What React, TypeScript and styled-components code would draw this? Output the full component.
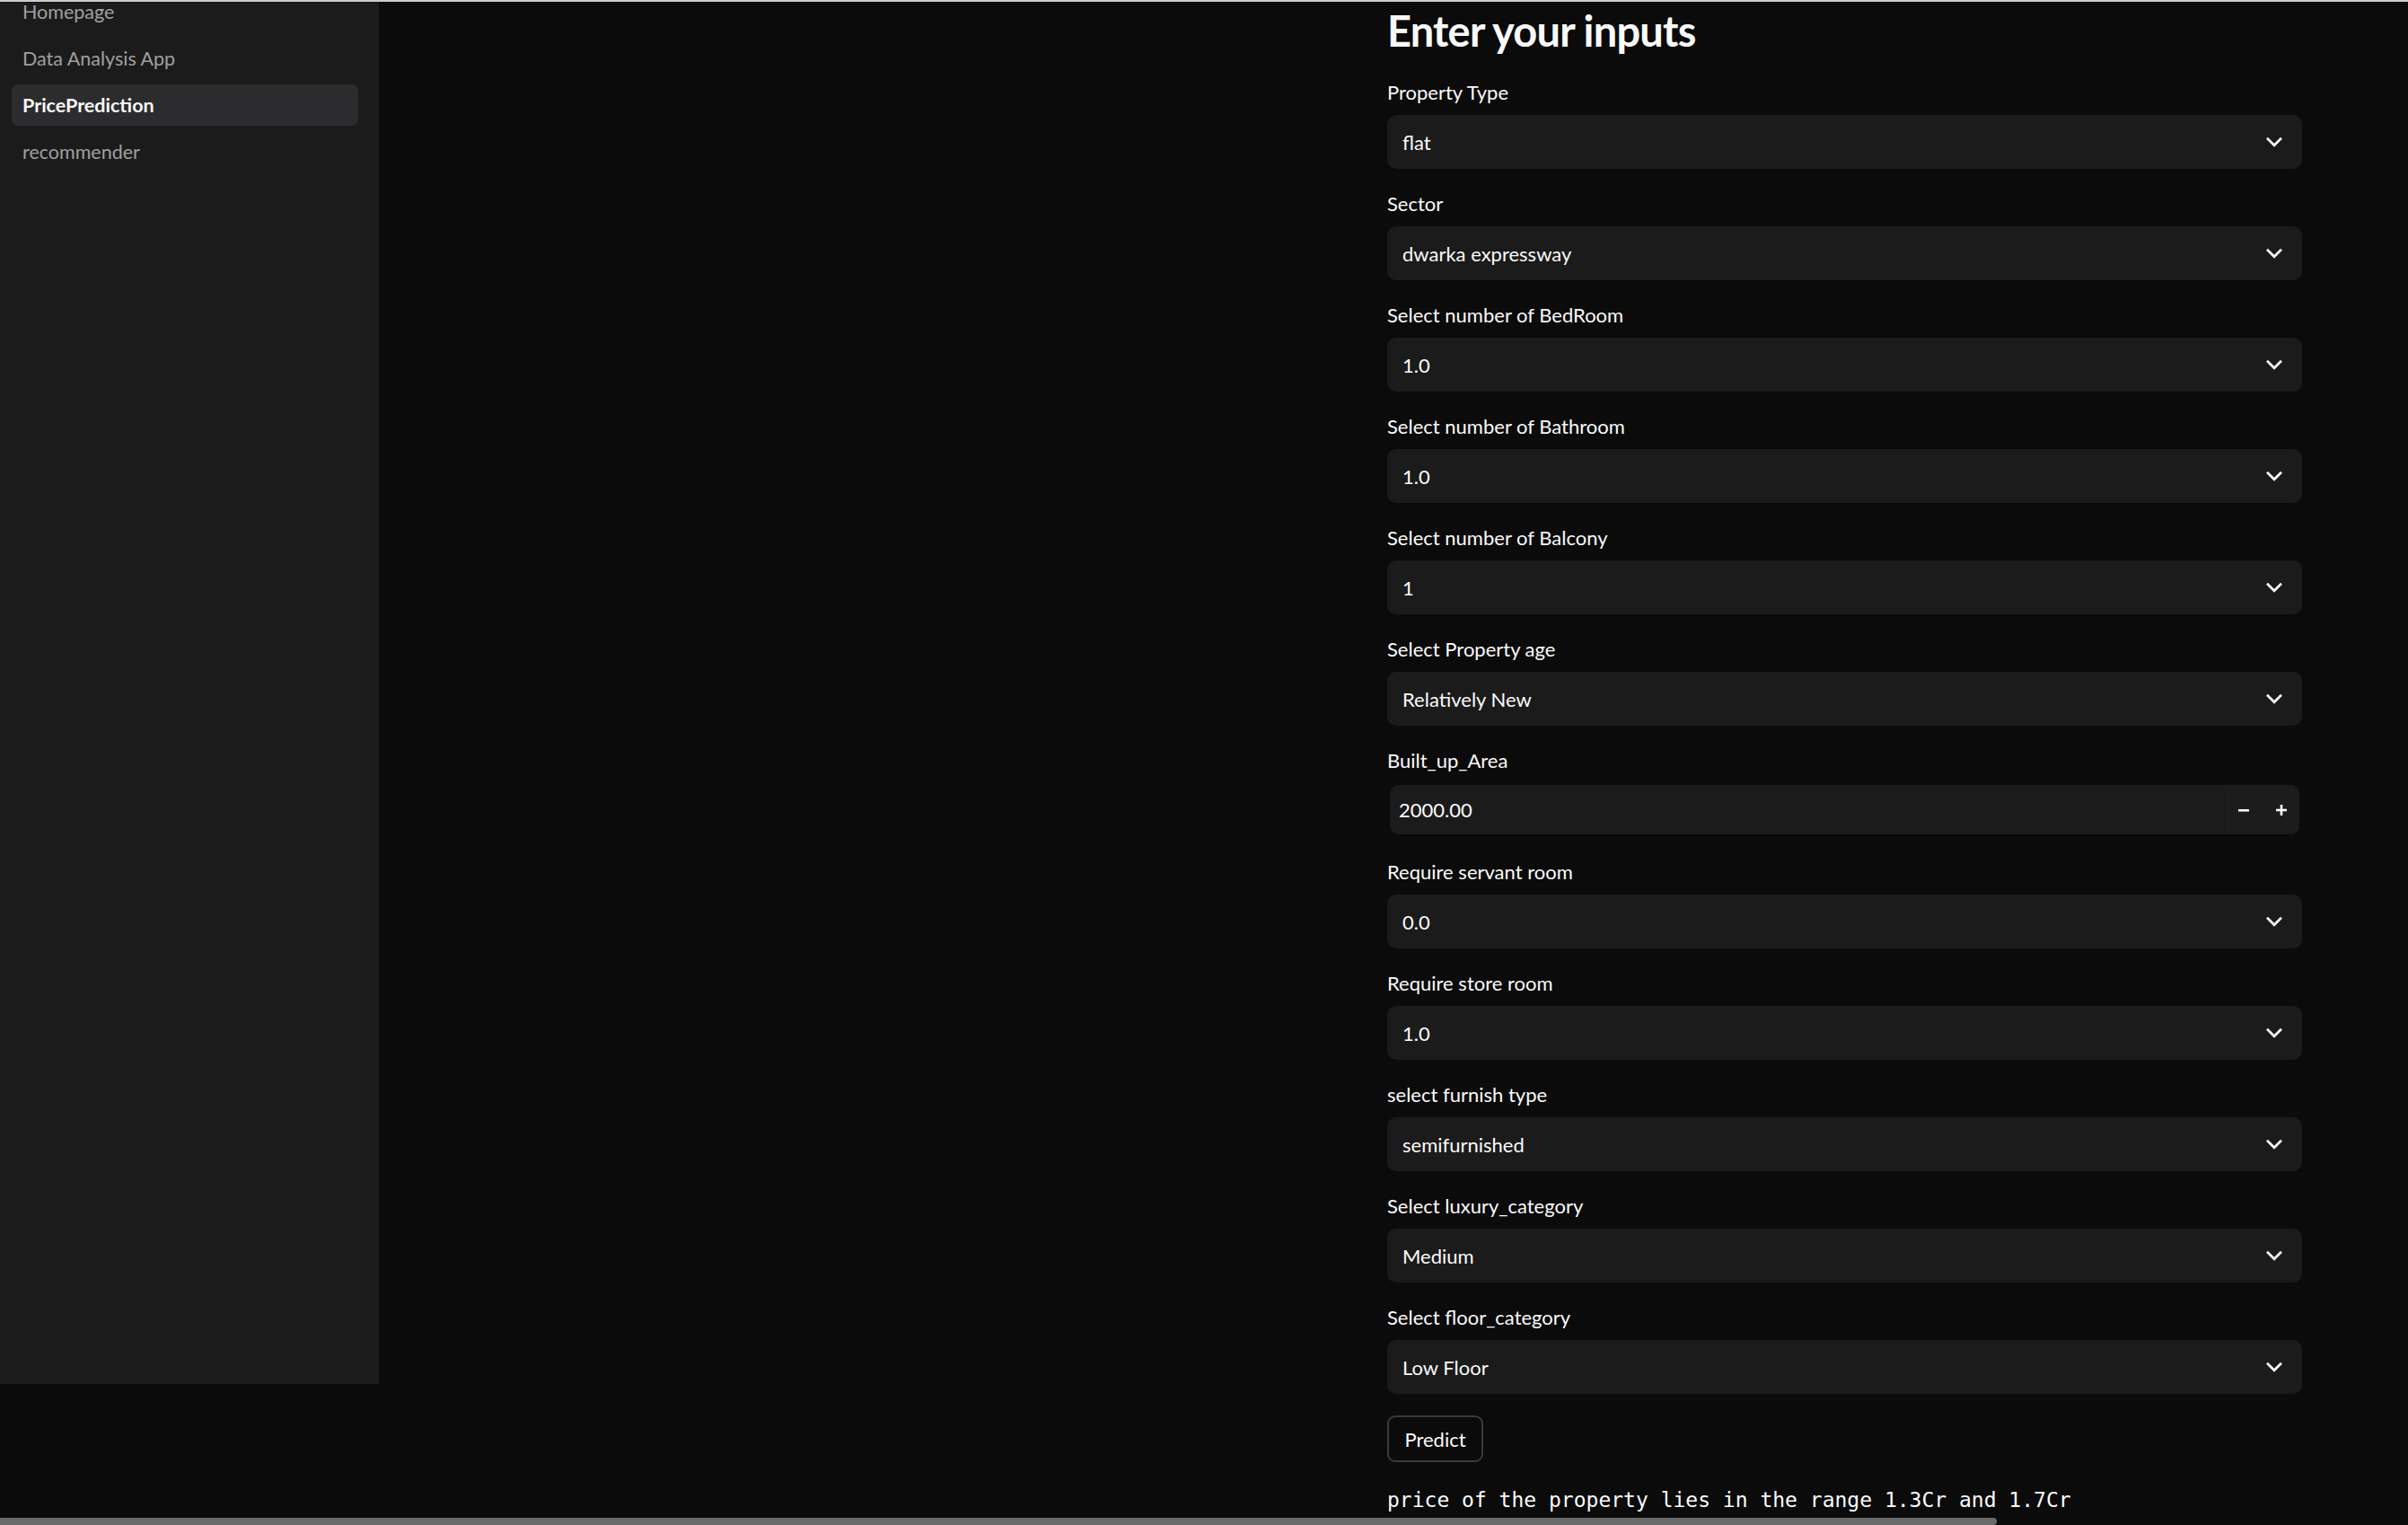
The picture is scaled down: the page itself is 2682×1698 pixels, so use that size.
import React from "react";
import styled, { createGlobalStyle } from "styled-components";

const Global = createGlobalStyle`
  html, body { margin: 0; padding: 0; background: #0b0b0b; }
  body { width: 2682px; height: 1698px; overflow: hidden; }
  #root { height: 1698px; }
`;

const Page = styled.div`
  width: 2682px;
  height: 1698px;
  background: #0b0b0b;
  border-top: 2px solid #cdcdcd;
  box-sizing: border-box;
  display: flex;
  align-items: flex-start;
  overflow: hidden;
  font-family: Lato, "Noto Sans", sans-serif;
  color: #fafafa;
`;

const Sidebar = styled.aside`
  width: 422px;
  height: 1539px;
  flex: none;
  background: #1b1b1b;
  overflow: hidden;
  box-sizing: border-box;
  padding: 0 23px 0 13px;
`;

const NavList = styled.nav`
  display: flex;
  flex-direction: column;
  gap: 6px;
  margin-top: -12px;
`;

const NavItem = styled.div<{ $active?: boolean }>`
  height: 46px;
  display: flex;
  align-items: center;
  padding-left: 12px;
  border-radius: 7px;
  font-size: 21.5px;
  font-weight: ${(p) => (p.$active ? 700 : 400)};
  color: ${(p) => (p.$active ? "#fafafa" : "rgba(250,250,250,0.6)")};
  background: ${(p) => (p.$active ? "#2c2c2e" : "transparent")};
`;

const Main = styled.main`
  flex: 1;
  display: flex;
  padding-left: 1123px;
`;

const Column = styled.div`
  width: 1019px;
  display: flex;
  flex-direction: column;
  gap: 24px;
  padding-top: 2px;
`;

const Title = styled.h2`
  margin: 0;
  font-size: 47px;
  line-height: 60px;
  font-weight: 700;
  letter-spacing: -0.8px;
`;

const Field = styled.div`
  display: flex;
  flex-direction: column;
  gap: 10px;
`;

const Label = styled.label`
  font-size: 22px;
  line-height: 30px;
  height: 30px;
  color: #fafafa;
`;

const SelectBox = styled.div`
  height: 60px;
  background: #1b1b1b;
  border-radius: 10px;
  display: flex;
  align-items: center;
  padding: 0 18px 0 17px;
  box-sizing: border-box;
  font-size: 22px;
`;

const Value = styled.span`
  flex: 1;
`;

const NumberWrap = styled.div`
  height: 60px;
  padding: 2px 3px 3px 3px;
  box-sizing: border-box;
  display: flex;
`;

const NumberBox = styled.div`
  flex: 1;
  background: #1b1b1b;
  border-radius: 10px;
  display: flex;
  align-items: stretch;
  overflow: hidden;
`;

const NumberText = styled.div`
  flex: 1;
  display: flex;
  align-items: center;
  padding-left: 10px;
  font-size: 22px;
`;

const StepButton = styled.div`
  width: 41px;
  display: flex;
  align-items: center;
  justify-content: center;
  background: #1c1c1c;
  border-left: 1px solid #191919;
`;

const PredictButton = styled.button`
  align-self: flex-start;
  height: 52px;
  width: 107px;
  background: #0b0b0b;
  border: 2px solid #3a3a3a;
  border-radius: 9px;
  color: #fafafa;
  font-family: Lato, "Noto Sans", sans-serif;
  font-size: 22px;
  padding: 0;
`;

const Output = styled.div`
  font-family: "DejaVu Sans Mono", "Liberation Mono", monospace;
  font-size: 23px;
  line-height: 36px;
  color: #fafafa;
  white-space: pre;
`;

const ScrollBar = styled.div`
  position: fixed;
  left: 0;
  bottom: 0;
  width: 2224px;
  height: 8px;
  background: #6b6b6b;
  border-radius: 0 4px 4px 0;
`;

const Chevron = () => (
  <svg width="26" height="26" viewBox="0 0 24 24" fill="none">
    <path d="M5.5 9l6.5 6.5 6.5-6.5" stroke="#fafafa" strokeWidth="2.5" strokeLinecap="square" />
  </svg>
);

const Minus = () => (
  <svg width="14" height="14" viewBox="0 0 14 14">
    <rect x="1" y="6" width="12" height="2.6" fill="#fafafa" />
  </svg>
);

const Plus = () => (
  <svg width="14" height="14" viewBox="0 0 14 14">
    <rect x="1" y="5.7" width="12" height="2.6" fill="#fafafa" />
    <rect x="5.7" y="1" width="2.6" height="12" fill="#fafafa" />
  </svg>
);

type Sel = { label: string; value: string };

const before: Sel[] = [
  { label: "Property Type", value: "flat" },
  { label: "Sector", value: "dwarka expressway" },
  { label: "Select number of BedRoom", value: "1.0" },
  { label: "Select number of Bathroom", value: "1.0" },
  { label: "Select number of Balcony", value: "1" },
  { label: "Select Property age", value: "Relatively New" },
];

const after: Sel[] = [
  { label: "Require servant room", value: "0.0" },
  { label: "Require store room", value: "1.0" },
  { label: "select furnish type", value: "semifurnished" },
  { label: "Select luxury_category", value: "Medium" },
  { label: "Select floor_category", value: "Low Floor" },
];

const SelectField = ({ label, value }: Sel) => (
  <Field>
    <Label>{label}</Label>
    <SelectBox>
      <Value>{value}</Value>
      <Chevron />
    </SelectBox>
  </Field>
);

export default function App() {
  return (
    <>
      <Global />
      <Page>
        <Sidebar>
          <NavList>
            <NavItem>Homepage</NavItem>
            <NavItem>Data Analysis App</NavItem>
            <NavItem $active>PricePrediction</NavItem>
            <NavItem>recommender</NavItem>
          </NavList>
        </Sidebar>
        <Main>
          <Column>
            <Title>Enter your inputs</Title>
            {before.map((s) => (
              <SelectField key={s.label} {...s} />
            ))}
            <Field>
              <Label>Built_up_Area</Label>
              <NumberWrap>
                <NumberBox>
                  <NumberText>2000.00</NumberText>
                  <StepButton>
                    <Minus />
                  </StepButton>
                  <StepButton>
                    <Plus />
                  </StepButton>
                </NumberBox>
              </NumberWrap>
            </Field>
            {after.map((s) => (
              <SelectField key={s.label} {...s} />
            ))}
            <PredictButton>Predict</PredictButton>
            <Output>price of the property lies in the range 1.3Cr and 1.7Cr</Output>
          </Column>
        </Main>
      </Page>
      <ScrollBar />
    </>
  );
}
